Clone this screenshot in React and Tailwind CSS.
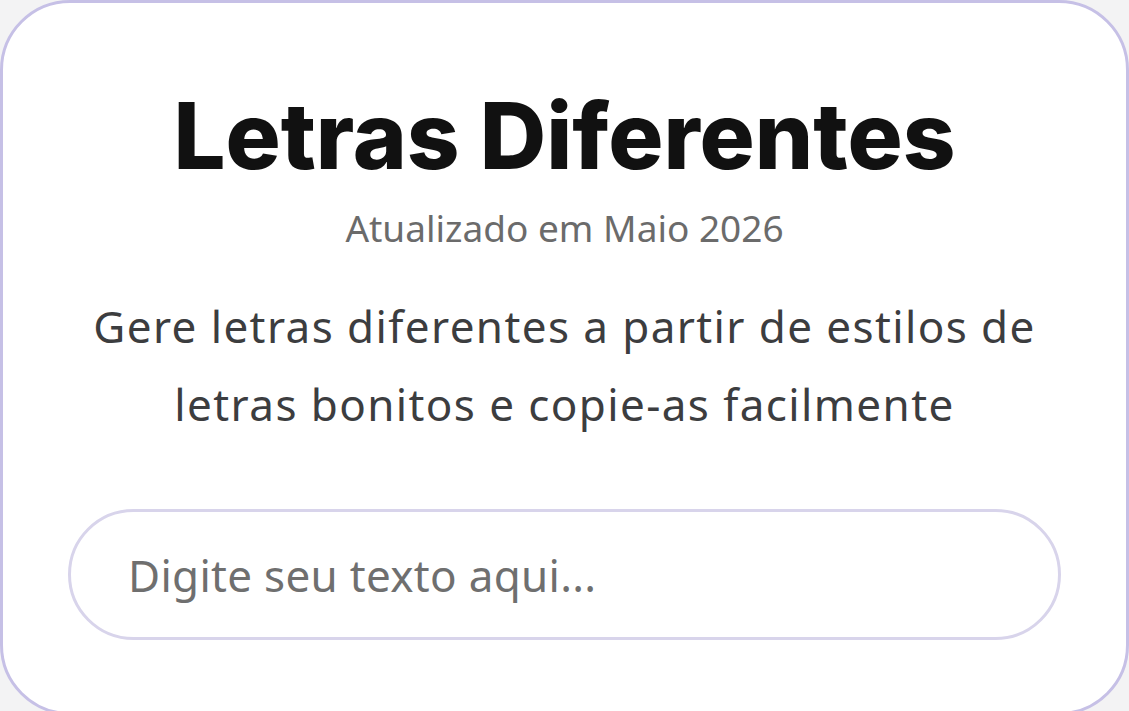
import React from 'react'

export default function App() {
  return (
    <div className="h-[711px] w-[1129px] overflow-hidden bg-[#f3f3f4]">
      {/* Card */}
      <div className="h-[715px] rounded-[70px] border-[3px] border-[#c6c0e6] bg-white px-[65px] pt-[87px] text-center [font-family:'Noto_Sans','Lato',sans-serif]">
        <h1 className="text-[92px] leading-none font-extrabold text-[#111111] [font-family:'Inter',sans-serif]">
          Letras Diferentes
        </h1>
        <p className="mt-[27px] text-[37px] leading-none text-[#6b6b6b]">
          Atualizado em Maio 2026
        </p>
        <p className="mt-[41px] text-[44px] leading-[78px] tracking-[1.4px] text-[#3c3d3f] whitespace-nowrap">
          Gere letras diferentes a partir de estilos de
          <br />
          letras bonitos e copie-as facilmente
        </p>

        {/* Input */}
        <div className="mt-[66px]">
          <input
            type="text"
            placeholder="Digite seu texto aqui..."
            className="h-[131px] w-full rounded-full border-[3px] border-[#d8d4eb] bg-white px-[57px] text-[44px] tracking-[0.3px] text-[#333] outline-none placeholder:text-[#6f6f6f]"
          />
        </div>
      </div>
    </div>
  )
}
